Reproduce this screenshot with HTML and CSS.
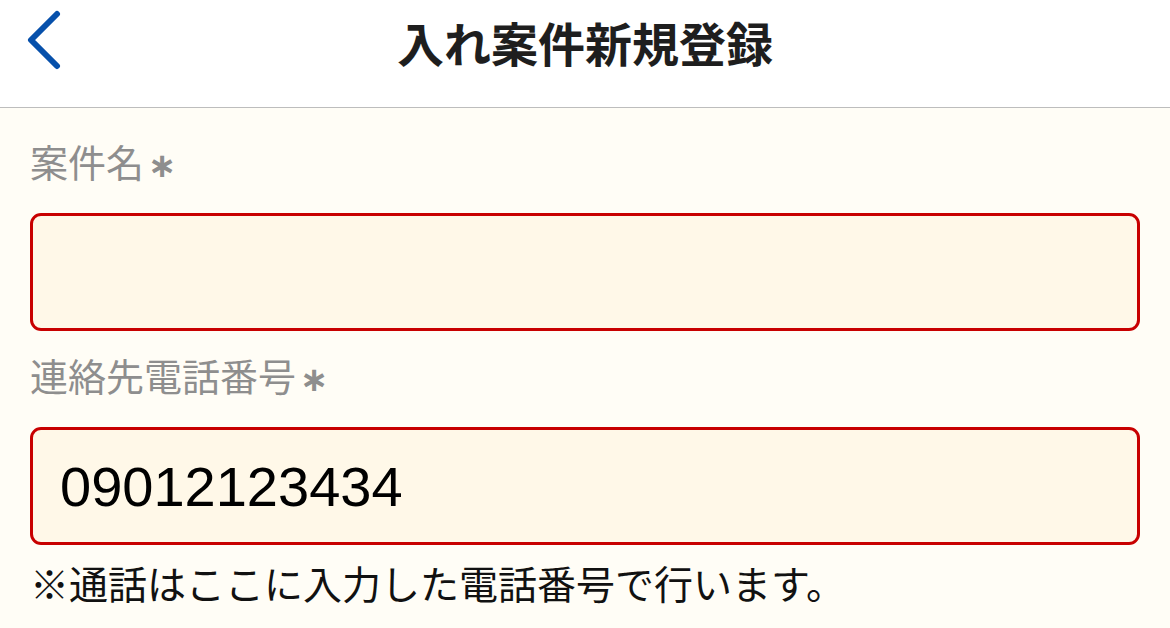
FILE: index.html
```html
<!DOCTYPE html>
<html lang="ja">
<head>
<meta charset="utf-8">
<title>入れ案件新規登録</title>
<link rel="stylesheet" href="styles.css">
</head>
<body>
<header class="nav">
  <button class="back" aria-label="戻る">
    <svg width="40" height="64" viewBox="0 0 40 64">
      <path d="M30 4 L4 30 L30 56" fill="none" stroke="#0650ab" stroke-width="6" stroke-linecap="round" stroke-linejoin="round"/>
    </svg>
  </button>
  <h1 class="title">入れ案件新規登録</h1>
</header>
<main class="form">
  <label class="label" for="name">案件名<span class="req">∗</span></label>
  <input class="field" id="name" type="text" value="">
  <label class="label label-2" for="tel">連絡先電話番号<span class="req">∗</span></label>
  <input class="field" id="tel" type="tel" value="09012123434">
  <p class="note">※通話はここに入力した電話番号で行います。</p>
</main>
</body>
</html>
```
FILE: styles.css
```css
* { box-sizing: border-box; }
html, body { margin: 0; padding: 0; }
body {
  width: 1170px;
  height: 628px;
  overflow: hidden;
  background: #fffdf6;
  font-family: "Noto Sans CJK JP", sans-serif;
}
.nav {
  position: relative;
  height: 108px;
  background: #ffffff;
  border-bottom: 1px solid #bdbdbd;
  display: flex;
  align-items: flex-start;
  justify-content: center;
}
.back {
  position: absolute;
  left: 27px;
  top: 10px;
  padding: 0;
  border: 0;
  background: none;
  width: 40px;
  height: 64px;
}
.back svg { display: block; }
.title {
  margin: 0;
  height: 84px;
  line-height: 84px;
  font-size: 47px;
  font-weight: 700;
  color: #1e1e1e;
}
.form {
  display: flex;
  flex-direction: column;
  padding: 0 30px;
}
.label {
  margin-top: 26px;
  height: 54px;
  line-height: 54px;
  font-size: 38px;
  color: #8e8e8e;
}
.label-2 { margin-top: 17px; }
.req {
  font-family: "DejaVu Sans", sans-serif;
  font-weight: 700;
  margin-left: 4px;
  font-size: 34px;
}
.field {
  margin-top: 25px;
  height: 118px;
  width: 100%;
  border: 3px solid #c80000;
  border-radius: 11px;
  background: #fff8e8;
  padding: 0 27px;
  font-family: "Liberation Sans", sans-serif;
  font-size: 56px;
  color: #000000;
  outline: none;
}
.note {
  margin: 12px 0 0;
  height: 50px;
  line-height: 50px;
  font-size: 39px;
  color: #111111;
}
```
